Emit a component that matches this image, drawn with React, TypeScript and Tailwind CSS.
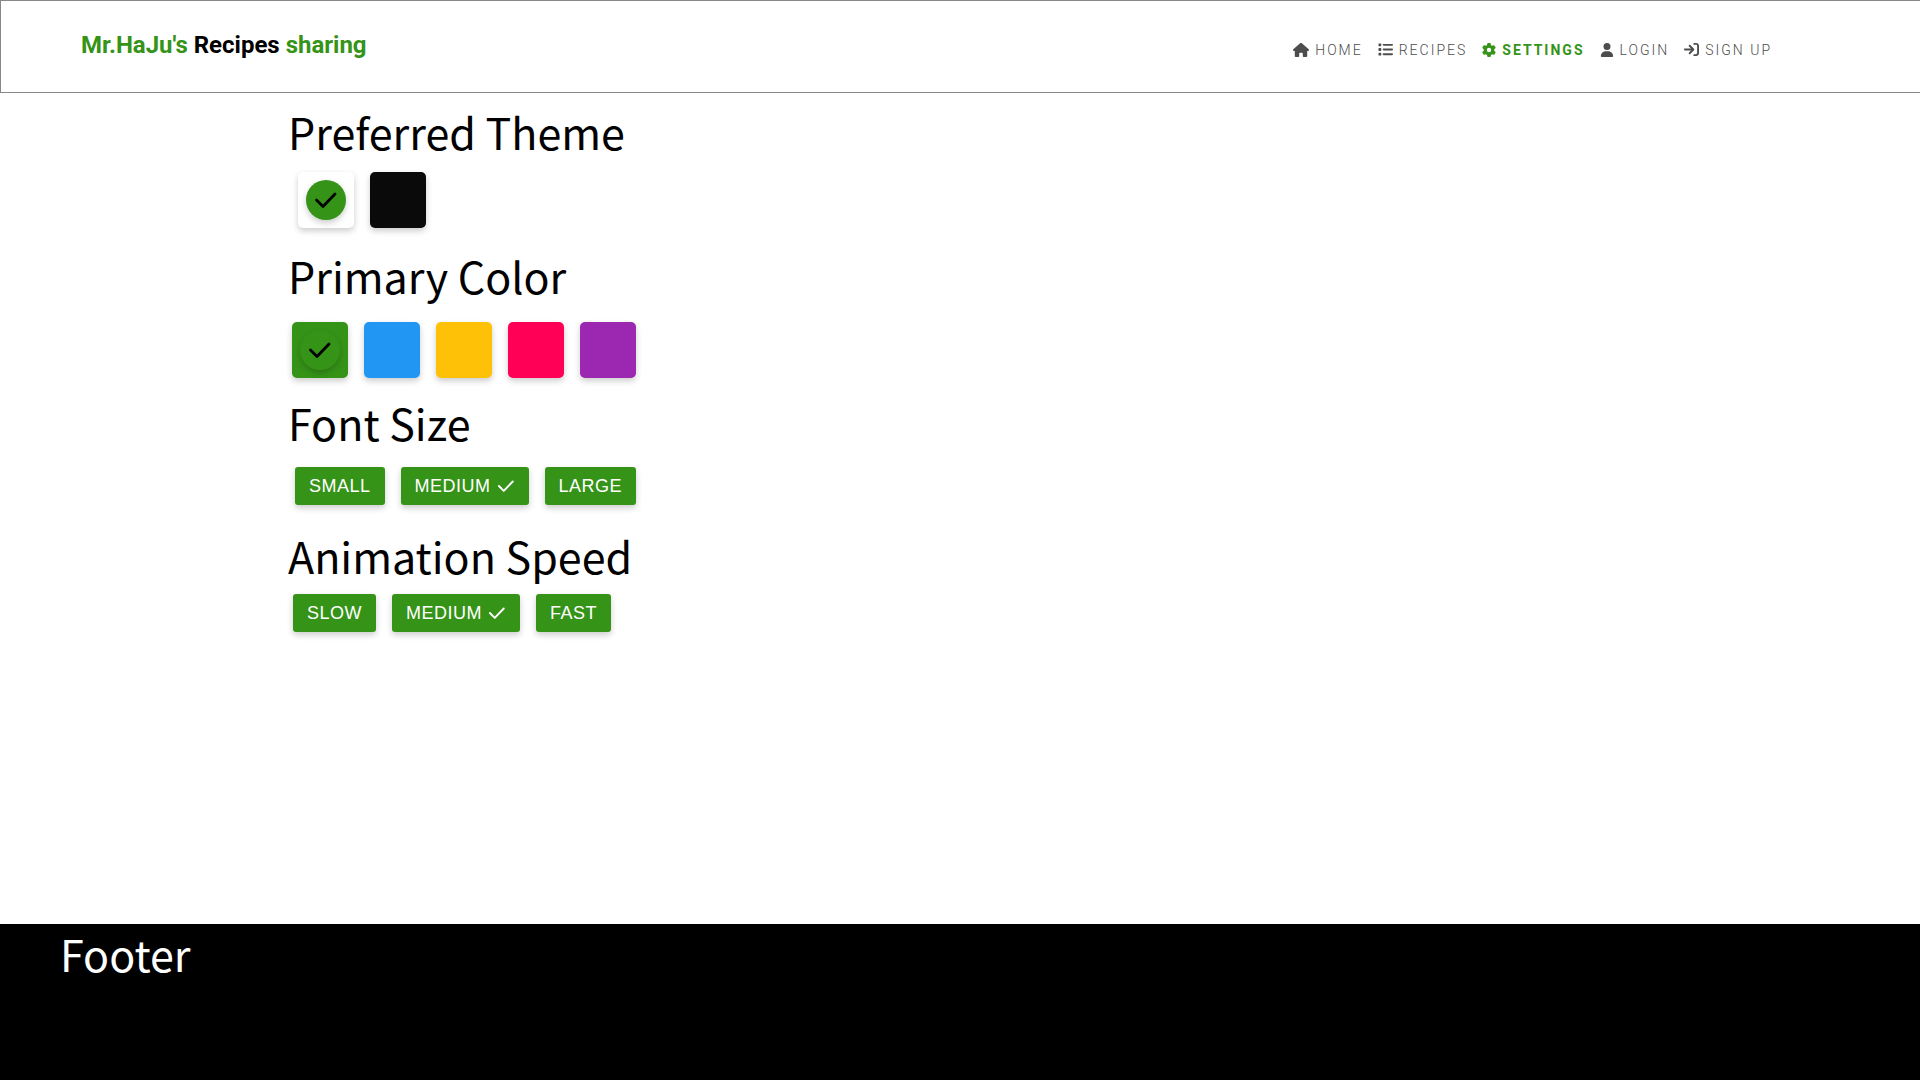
import { useState, type ReactNode } from "react";
import { FaArrowRightToBracket, FaGear, FaHouse, FaList, FaUser } from "react-icons/fa6";

const navItems = [
  { label: "HOME", icon: <FaHouse size={16} /> },
  { label: "RECIPES", icon: <FaList size={15} /> },
  { label: "SETTINGS", icon: <FaGear size={14} />, active: true },
  { label: "LOGIN", icon: <FaUser size={14} /> },
  { label: "SIGN UP", icon: <FaArrowRightToBracket size={15} /> },
];

const themes = [
  { name: "Light", className: "bg-white" },
  { name: "Dark", className: "bg-[#0a0a0a]" },
];

const colors = [
  { name: "Green", className: "bg-[#359318]" },
  { name: "Blue", className: "bg-[#2196f3]" },
  { name: "Amber", className: "bg-[#ffc107]" },
  { name: "Pink", className: "bg-[#ff0056]" },
  { name: "Purple", className: "bg-[#9c27b0]" },
];

function Check({ size, width }: { size: number; width: number }) {
  return (
    <svg width={size} height={size} viewBox="0 0 24 24" fill="none" stroke="currentColor" strokeWidth={width} strokeLinecap="round" strokeLinejoin="round" aria-hidden="true">
      <path d="M2.5 12 9 18.5 21 6" />
    </svg>
  );
}

function Heading({ children }: { children: ReactNode }) {
  return (
    <h2 className="font-['Noto_Sans_CJK_SC',sans-serif] text-[43px] leading-[58px] font-normal whitespace-nowrap">
      {children}
    </h2>
  );
}

function Swatches({ items, label }: { items: { name: string; className: string }[]; label: string }) {
  const [selected, setSelected] = useState(0);
  return (
    <div role="group" aria-label={label} className="flex gap-4">
      {items.map((item, i) => (
        <button
          key={item.name}
          type="button"
          aria-label={item.name}
          aria-pressed={i === selected}
          onClick={() => setSelected(i)}
          className={`flex size-14 items-center justify-center rounded-[5px] shadow-[0_3px_6px_rgba(0,0,0,0.2)] ${item.className}`}
        >
          {i === selected && (
            <span className="flex size-10 items-center justify-center rounded-full bg-[#359318] text-black shadow-[0_3px_6px_rgba(0,0,0,0.2)]">
              <Check size={24} width={2.8} />
            </span>
          )}
        </button>
      ))}
    </div>
  );
}

function Choices({ items, label }: { items: string[]; label: string }) {
  const [selected, setSelected] = useState(1);
  return (
    <div role="group" aria-label={label} className="flex gap-4">
      {items.map((item, i) => (
        <button
          key={item}
          type="button"
          aria-pressed={i === selected}
          onClick={() => setSelected(i)}
          className="flex h-[38px] items-center gap-1.5 rounded-[3px] bg-[#359318] px-3.5 font-['Liberation_Sans',Arial,sans-serif] text-[18px] tracking-[0.5px] text-white shadow-[0_3px_6px_rgba(0,0,0,0.2)]"
        >
          {item}
          {i === selected && <Check size={18} width={2.6} />}
        </button>
      ))}
    </div>
  );
}

export default function App() {
  return (
    <div className="flex min-h-screen flex-col bg-white text-black">
      <header className="flex h-[93px] items-center justify-between border border-r-0 border-[#888] pr-[148px] pl-20 font-[Roboto,sans-serif]">
        <a href="#" className="mb-1 text-2xl font-bold text-[#359318]">
          Mr.HaJu's <span className="text-black">Recipes</span> sharing
        </a>
        <nav aria-label="Main" className="mt-1.5 flex gap-[15px]">
          {navItems.map((item) => (
            <a
              key={item.label}
              href="#"
              aria-current={item.active ? "page" : undefined}
              className={`flex items-center gap-1.5 text-sm leading-5 tracking-[2px] ${item.active ? "font-bold text-[#359318]" : "font-light text-[#4d4d4d]"}`}
            >
              {item.icon}
              {item.label}
            </a>
          ))}
        </nav>
      </header>

      <main className="grow pt-[9px] pb-10 pl-[15%]">
        <section>
          <Heading>Preferred Theme</Heading>
          <div className="mt-3 pl-2.5">
            <Swatches items={themes} label="Preferred Theme" />
          </div>
        </section>
        <section className="mt-[18px]">
          <Heading>Primary Color</Heading>
          <div className="mt-[18px] pl-1">
            <Swatches items={colors} label="Primary Color" />
          </div>
        </section>
        <section className="mt-[15px]">
          <Heading>Font Size</Heading>
          <div className="mt-4 pl-[7px]">
            <Choices items={["SMALL", "MEDIUM", "LARGE"]} label="Font Size" />
          </div>
        </section>
        <section className="mt-[21px]">
          <Heading>Animation Speed</Heading>
          <div className="mt-2.5 pl-[5px]">
            <Choices items={["SLOW", "MEDIUM", "FAST"]} label="Animation Speed" />
          </div>
        </section>
      </main>

      <footer className="h-[156px] bg-black pl-[60px] text-white">
        <Heading>Footer</Heading>
      </footer>
    </div>
  );
}
